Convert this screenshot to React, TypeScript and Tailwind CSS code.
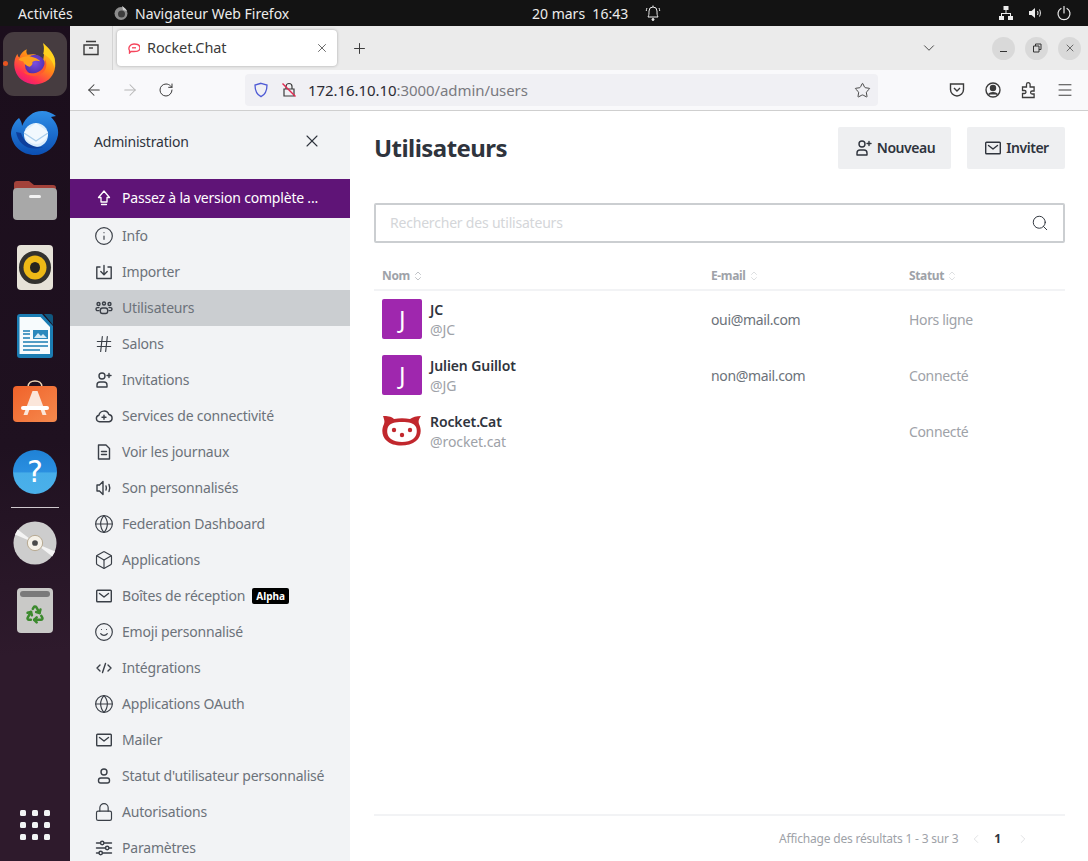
import { ReactNode } from 'react'
import {
  ArrowLeft,
  ArrowRight,
  Box,
  ChevronDown,
  ChevronLeft,
  ChevronRight,
  ChevronsUpDown,
  Globe,
  Hash,
  Info,
  Lock,
  Menu,
  Plus,
  Recycle,
  RotateCw,
  Search,
  Smile,
  Star,
  X,
} from 'lucide-react'

const Svg = ({ children, size = 20, className = '' }: { children: ReactNode; size?: number; className?: string }) => (
  <svg
    width={size}
    height={size}
    viewBox="0 0 20 20"
    fill="none"
    stroke="currentColor"
    strokeWidth="1.4"
    strokeLinecap="round"
    strokeLinejoin="round"
    className={className}
  >
    {children}
  </svg>
)

const MailIcon = ({ size = 20 }: { size?: number }) => (
  <Svg size={size}>
    <rect x="2.7" y="4.2" width="14.6" height="11.6" rx="0.8" />
    <path d="M5.5 7.5 10 11l4.5-3.5" />
  </Svg>
)

const UserPlusIcon = ({ size = 20 }: { size?: number }) => (
  <Svg size={size}>
    <circle cx="8" cy="6" r="3" />
    <path d="M3 17v-2a3 3 0 0 1 3-3h4a3 3 0 0 1 3 3v2z" />
    <path d="M15 3.5v4M13 5.5h4" />
  </Svg>
)

const IconImport = () => (
  <Svg>
    <path d="M6 5H2.800v11.500h14.400V5H14" />
    <path d="M10 3.500v9M6.800 9.600 10 12.800l3.200-3.200" />
  </Svg>
)

const IconTeam = () => (
  <Svg>
    <circle cx="4.500" cy="6" r="1.500" />
    <circle cx="10" cy="5.500" r="1.500" />
    <circle cx="15.500" cy="6" r="1.500" />
    <rect x="6.300" y="10" width="7.400" height="5.500" rx="2.200" />
    <path d="M5 9.600H3.500a1.400 1.400 0 0 0 0 3H5M15 9.600h1.500a1.400 1.400 0 0 1 0 3H15" />
  </Svg>
)

const IconCloud = () => (
  <Svg>
    <path d="M5.500 15.800a3.300 3.300 0 0 1-.6-6.500 5.200 5.200 0 0 1 10-.8 3.700 3.700 0 0 1 .2 7.300z" />
    <path d="M10 9.200v4M8 11.200h4" />
  </Svg>
)

const IconFile = () => (
  <Svg>
    <path d="M4.500 3h7.500l3.500 3.500V17h-11z" />
    <path d="M7.500 9.500h5M7.500 12.500h5" />
  </Svg>
)

const IconSound = () => (
  <Svg>
    <path d="M3 7h2.500L9 3.500v13L5.500 13H3z" />
    <path d="M12 8c.5 1.300.5 2.700 0 4M15 6.500c1 2.200 1 4.800 0 7" />
  </Svg>
)

const IconCode = () => (
  <Svg>
    <path d="M6 7 3 10l3 3M14 7l3 3-3 3M11.500 5.500l-3 9" />
  </Svg>
)

const IconUser = () => (
  <Svg>
    <circle cx="10" cy="6" r="3" />
    <rect x="4.500" y="12" width="11" height="5" rx="2.200" />
  </Svg>
)

const IconSliders = () => (
  <Svg>
    <path d="M2.500 5h4M10 5h7.500M2.500 10h9M15 10h2.500M2.500 15h2.500M8.500 15h9" />
    <circle cx="8.200" cy="5" r="1.700" />
    <circle cx="13.200" cy="10" r="1.700" />
    <circle cx="6.700" cy="15" r="1.700" />
  </Svg>
)

const menu: { label: string; icon: ReactNode; active?: boolean; badge?: string }[] = [
  { label: 'Info', icon: <Info size={20} strokeWidth={1.4} /> },
  { label: 'Importer', icon: <IconImport /> },
  { label: 'Utilisateurs', icon: <IconTeam />, active: true },
  { label: 'Salons', icon: <Hash size={20} strokeWidth={1.4} /> },
  { label: 'Invitations', icon: <UserPlusIcon /> },
  { label: 'Services de connectivité', icon: <IconCloud /> },
  { label: 'Voir les journaux', icon: <IconFile /> },
  { label: 'Son personnalisés', icon: <IconSound /> },
  { label: 'Federation Dashboard', icon: <Globe size={20} strokeWidth={1.4} /> },
  { label: 'Applications', icon: <Box size={20} strokeWidth={1.4} /> },
  { label: 'Boîtes de réception', icon: <MailIcon />, badge: 'Alpha' },
  { label: 'Emoji personnalisé', icon: <Smile size={20} strokeWidth={1.4} /> },
  { label: 'Intégrations', icon: <IconCode /> },
  { label: 'Applications OAuth', icon: <Globe size={20} strokeWidth={1.4} /> },
  { label: 'Mailer', icon: <MailIcon /> },
  { label: "Statut d'utilisateur personnalisé", icon: <IconUser /> },
  { label: 'Autorisations', icon: <Lock size={20} strokeWidth={1.4} /> },
  { label: 'Paramètres', icon: <IconSliders /> },
]

const users = [
  { name: 'JC', handle: '@JC', email: 'oui@mail.com', status: 'Hors ligne', letter: 'J' },
  { name: 'Julien Guillot', handle: '@JG', email: 'non@mail.com', status: 'Connecté', letter: 'J' },
  { name: 'Rocket.Cat', handle: '@rocket.cat', email: '', status: 'Connecté', letter: '' },
]

const FirefoxLogo = () => (
  <svg width="44" height="46" viewBox="0 0 48 48">
    <defs>
      <linearGradient id="ffa" x1="0.8" y1="0" x2="0.2" y2="1">
        <stop offset="0" stopColor="#ffe226" />
        <stop offset="0.45" stopColor="#ff8a16" />
        <stop offset="0.8" stopColor="#ff2d55" />
        <stop offset="1" stopColor="#e31587" />
      </linearGradient>
      <radialGradient id="ffb" cx="0.5" cy="0.4" r="0.6">
        <stop offset="0" stopColor="#7b4fe0" />
        <stop offset="1" stopColor="#4d2ba8" />
      </radialGradient>
    </defs>
    <path d="M33 1c2 5 9 9 12 16 3 9 0 19-6 24-8 7-22 7-30 0C3 36 0 27 2 19c1-3 2-5 3-6 0 2 1 3 2 4 1-4 4-7 8-9-1 3 0 5 1 6 4-1 8-1 11 1l6 4c1-6 2-12 0-18z" fill="url(#ffa)" />
    <circle cx="24" cy="25" r="11" fill="url(#ffb)" />
    <path d="M6 19c3-3 10-4 14-3 5 1 9 4 10 5-3-1-7-1-9 1 1 2-1 4-3 5-3-1-6-3-7-6-1 0-4-1-5-2z" fill="#ffa01c" />
    <path d="M35 19c3 6 1 13-5 16-6 4-15 2-19-3 6 3 14 3 19-1 4-3 5-8 5-12z" fill="#ff5a2c" />
    <path d="M33 1c4 4 10 9 12 16 1 4 1 8 0 11-1-7-6-12-12-15 1-4 1-8 0-12z" fill="#ffd21e" />
  </svg>
)

const ThunderbirdLogo = () => (
  <svg width="48" height="46" viewBox="0 0 48 46">
    <defs>
      <linearGradient id="tba" x1="0" y1="0" x2="0" y2="1">
        <stop offset="0" stopColor="#2f8fe8" />
        <stop offset="1" stopColor="#0b4fb3" />
      </linearGradient>
    </defs>
    <path d="M8 8c2 3 3 5 3 8C15 7 22 1 31 1c6 0 10 2 14 5l-5 1c5 5 8 11 7 18-2 12-12 20-23 20C11 45 1 36 0 24c0-6 3-12 8-16z" fill="url(#tba)" />
    <circle cx="25" cy="25" r="12" fill="#d9ecfb" />
    <path d="M13 22 25 13l12 9v3c-3 6-7 9-12 9s-9-3-12-9z" fill="#f1f8fe" />
    <path d="M13 23l12 8 12-8" fill="none" stroke="#a9cdec" strokeWidth="1.400" />
    <path d="M5 22c2 13 14 20 27 15-10 1-19-4-22-14z" fill="#0d3f9c" />
  </svg>
)

const dockIcons: { key: string; className: string; node: ReactNode }[] = [
  {
    key: 'thunderbird',
    className: 'mt-[14px]',
    node: <ThunderbirdLogo />,
  },
  {
    key: 'files',
    className: 'mt-[24px]',
    node: (
      <svg width="44" height="40" viewBox="0 0 44 40" className="block">
        <path d="M1 4a3 3 0 0 1 3-3h12l5 4h19a3 3 0 0 1 3 3v10H1z" fill="#a3423a" />
        <rect x="0" y="8" width="44" height="32" rx="4" fill="#a8a8a8" />
        <rect x="16" y="15" width="12" height="3" rx="1.500" fill="#f3f3f3" />
      </svg>
    ),
  },
  {
    key: 'rhythmbox',
    className: 'mt-[25px]',
    node: (
      <svg width="36" height="45" viewBox="0 0 36 45" className="block">
        <rect width="36" height="45" rx="4" fill="#e6e2d8" />
        <ellipse cx="18" cy="22.500" rx="16" ry="16.500" fill="#33322f" />
        <ellipse cx="18" cy="22.500" rx="11.500" ry="12" fill="#edb916" />
        <ellipse cx="18" cy="22.500" rx="5" ry="5.500" fill="#26251f" />
      </svg>
    ),
  },
  {
    key: 'writer',
    className: 'mt-[24px]',
    node: (
      <svg width="36" height="44" viewBox="0 0 36 44" className="block">
        <path d="M3 0h22l11 12v29a3 3 0 0 1-3 3H3a3 3 0 0 1-3-3V3a3 3 0 0 1 3-3z" fill="#1b7db3" />
        <path d="M2.500 3h21l9.500 10v27H2.500z" fill="#f7fbfd" />
        <path d="M27 0h6a3 3 0 0 1 3 3v8z" fill="#10577f" />
        <path d="M6 17h7M6 20h7M6 24h7M6 28h25M6 32h25M6 36h17" stroke="#1b7db3" strokeWidth="1.600" />
        <rect x="16" y="16" width="15" height="9" fill="#2a88bd" />
        <path d="M17 24l4-5 3 3 2-2 4 4z" fill="#d7ebf6" />
      </svg>
    ),
  },
  {
    key: 'store',
    className: 'mt-[22px]',
    node: (
      <svg width="44" height="42" viewBox="0 0 44 42" className="block">
        <defs>
          <linearGradient id="sto" x1="0" y1="0" x2="1" y2="1">
            <stop offset="0" stopColor="#f0622a" />
            <stop offset="1" stopColor="#f58a4e" />
          </linearGradient>
        </defs>
        <path d="M15 7c0-8 14-8 14 0" fill="none" stroke="#eed5b5" strokeWidth="1.600" />
        <rect y="6" width="44" height="36" rx="4" fill="url(#sto)" />
        <path d="M19.500 11h5l9 24h-4l-2.500-7h-10L14.500 35h-4z" fill="#fbe6da" />
        <rect x="8" y="26" width="28" height="4" rx="2" fill="#fff" />
      </svg>
    ),
  },
  {
    key: 'help',
    className: 'mt-[28px]',
    node: (
      <div className="flex h-[44px] w-[44px] items-center justify-center rounded-full bg-[linear-gradient(#1f82d6_0%,#2a8fe0_50%,#47aee9_52%,#4ab0ea_100%)] font-['DejaVu_Sans',sans-serif] text-[30px] leading-none tracking-normal text-white">
        ?
      </div>
    ),
  },
]

const App = () => {
  return (
    <div className="flex h-screen w-full flex-col overflow-hidden bg-white font-['Noto_Sans','Liberation_Sans',sans-serif] text-[14px] text-[#6c727a] tracking-[-0.2px]">
      {/* barre gnome */}
      <div className="flex h-[26px] shrink-0 items-center bg-[#131313] text-[14px] tracking-normal text-[#ececec]">
        <div className="ml-[18px] w-[96px]">Activités</div>
        <svg width="16" height="16" viewBox="0 0 16 16" className="ml-[-1px]">
          <circle cx="8" cy="8.500" r="6.500" fill="#8c8c8c" />
          <circle cx="8.500" cy="9" r="3.500" fill="#3d3d3d" />
          <path d="M9 1c2 1 4 3 5 5L10 5z" fill="#cfcfcf" />
        </svg>
        <div className="ml-[6px] w-[397px]">Navigateur Web Firefox</div>
        <div className="w-[96px] whitespace-nowrap">20 mars&nbsp;&nbsp;16:43</div>
        <svg width="16" height="18" viewBox="0 0 16 18" fill="none" stroke="#ececec" strokeWidth="1" className="ml-[17px]">
          <path d="M3 13c1-2 1-3 1-6a4 4 0 0 1 8 0c0 3 0 4 1 6z" />
          <path d="M8 3V1.500M2 4c-.5 1-.7 2-.7 3M14 4c.5 1 .7 2 .7 3" />
          <circle cx="8" cy="15.500" r="1" fill="#ececec" />
        </svg>
        <div className="ml-auto mr-[16px] flex items-center gap-[13px]">
          <svg width="16" height="16" viewBox="0 0 16 16" fill="#ececec">
            <rect x="5.500" y="1" width="5" height="4" />
            <rect x="1" y="11" width="5" height="4" />
            <rect x="10" y="11" width="5" height="4" />
            <path d="M7.500 5h1v3h4.500v3h-1V9H4v2H3V8h4.500z" />
          </svg>
          <svg width="16" height="16" viewBox="0 0 16 16" fill="none" stroke="#ececec">
            <path d="M2 6h2.500L8 3v10l-3.500-3H2z" fill="#ececec" stroke="none" />
            <path d="M10.500 6c.6 1.300.6 2.700 0 4M12.500 4.500c1.200 2.200 1.200 4.800 0 7" />
          </svg>
          <svg width="16" height="16" viewBox="0 0 16 16" fill="none" stroke="#ececec" strokeWidth="1.200" strokeLinecap="round">
            <path d="M8 1.500v6.500" />
            <path d="M5 3.500a6 6 0 1 0 6 0" />
          </svg>
        </div>
      </div>

      <div className="flex min-h-0 flex-1">
        {/* dock */}
        <div className="flex w-[70px] shrink-0 flex-col items-center bg-[linear-gradient(175deg,#1b0e1c_0%,#1f1120_50%,#2e1a2c_75%,#2e1a2c_100%)]">
          <div className="relative mt-[6px] flex h-[64px] w-[64px] items-center justify-center rounded-[11px] bg-[#463c40]">
            <FirefoxLogo />
            <div className="absolute left-[0px] top-[29px] h-[5px] w-[5px] rounded-full bg-[#e95420]" />
          </div>
          {dockIcons.map((item) => (
            <div key={item.key} className={`flex justify-center ${item.className}`}>
              {item.node}
            </div>
          ))}
          <div className="mt-[13px] h-px w-[48px] shrink-0 bg-[#cfc9cd]" />
          <div className="mt-[13px]">
            <svg width="44" height="44" viewBox="0 0 46 46" className="block">
              <circle cx="23" cy="23" r="22.500" fill="#cdcdcd" />
              <path d="M23 23 5 9 2 14zM23 23l18 14 3-5z" fill="#f4f4f4" />
              <circle cx="23" cy="23" r="8" fill="#f5f1e8" stroke="#b3a68e" />
              <circle cx="23" cy="23" r="3" fill="#4a4a4a" />
            </svg>
          </div>
          <div className="mt-[23px] flex h-[45px] w-[36px] flex-col items-center rounded-[4px] bg-[#c9c9c7] pt-[3px]">
            <div className="h-[6px] w-[30px] rounded-[3px] bg-[#7a7a7a]" />
            <Recycle size={20} strokeWidth={3} className="mt-[7px] text-[#3c8a2e]" />
          </div>
          <div className="mb-[21px] mt-auto grid grid-cols-3 gap-x-[6px] gap-y-[6px]">
            {Array.from({ length: 9 }).map((_, i) => (
              <div key={i} className="h-[6px] w-[6px] rounded-[1.5px] bg-[#f2f2f2]" />
            ))}
          </div>
        </div>

        {/* navigateur */}
        <div className="flex min-w-0 flex-1 flex-col">
          <div className="flex h-[44px] shrink-0 items-center bg-[#ebebeb] text-[#3b3b3b]">
            <div className="flex h-full w-[43px] items-center justify-center border-r border-[#d4d4d4]">
              <svg width="18" height="18" viewBox="0 0 18 18" fill="none" stroke="#3b3b3b" strokeWidth="1.400">
                <path d="M4 2.500h10M2 6h14v9.500H2z" />
                <path d="M7 9h4" />
              </svg>
            </div>
            <div className="ml-[4px] flex h-[36px] w-[220px] items-center rounded-[4px] bg-white pl-[11px] pr-[8px] shadow-[0_0_3px_rgba(0,0,0,0.3)]">
              <svg width="12" height="12" viewBox="0 0 12 12" fill="none" stroke="#f5455c" strokeWidth="1.300">
                <path d="M3 9.500 1.500 11V8.500C0 6 1.500 2 6 2s6 2 6 4-2 3.500-6 3.500z" />
                <path d="M4 5.800h4" />
              </svg>
              <span className="ml-[7px] text-[14.500px] tracking-[-0.1px] text-[#3b3b3b]">Rocket.Chat</span>
              <X size={14} strokeWidth={1.300} className="ml-auto" />
            </div>
            <Plus size={17} strokeWidth={1.400} className="ml-[14px]" />
            <ChevronDown size={18} strokeWidth={1.200} className="ml-[552px]" />
            <div className="ml-[54px] flex items-center gap-[10px] pr-[5px]">
              <div className="flex h-[23px] w-[23px] items-center justify-center rounded-full bg-[#d9d9d9]">
                <div className="mt-[6px] h-px w-[7px] bg-[#333]" />
              </div>
              <div className="flex h-[23px] w-[23px] items-center justify-center rounded-full bg-[#d9d9d9]">
                <svg width="10" height="10" viewBox="0 0 10 10" fill="none" stroke="#333">
                  <path d="M1.500 3h5.500v6H1.500zM3.500 3V1H9v5.500H7" />
                </svg>
              </div>
              <div className="flex h-[23px] w-[23px] items-center justify-center rounded-full bg-[#d9d9d9]">
                <X size={12} strokeWidth={1.400} />
              </div>
            </div>
          </div>

          <div className="flex h-[41px] shrink-0 items-center border-b border-[#cfcfcf] bg-[#f9f9fb] text-[#3b3b3b]">
            <ArrowLeft size={18} strokeWidth={1.400} className="ml-[15px]" />
            <ArrowRight size={18} strokeWidth={1.400} className="ml-[18px] text-[#b5b5b5]" />
            <RotateCw size={16} strokeWidth={1.500} className="ml-[19px]" />
            <div className="ml-[71px] flex h-[32px] w-[633px] items-center rounded-[4px] bg-[#f0f0f4] pl-[8px] pr-[7px]">
              <svg width="16" height="16" viewBox="0 0 16 16" fill="none" stroke="#4f5bd5" strokeWidth="1.300">
                <path d="M8 1.300 14 3c0 6-1.500 9.500-6 11.700C3.500 12.500 2 9 2 3z" />
              </svg>
              <svg width="16" height="16" viewBox="0 0 16 16" fill="none" stroke="#3b3b3b" strokeWidth="1.200" className="ml-[12px]">
                <path d="M5 7V4.500a3 3 0 0 1 6 0V7M3 7h10v7H3z" />
                <path d="M1.500 1.500l13 13" stroke="#e22850" strokeWidth="1.400" />
              </svg>
              <span className="ml-[11px] text-[15px] tracking-[-0.07px] text-[#2b2a33]">
                172.16.10.10<span className="text-[#7a7a80]">:3000/admin/users</span>
              </span>
              <Star size={17} strokeWidth={1.300} className="ml-auto" />
            </div>
            <div className="ml-[70px] flex items-center gap-[18px]">
              <svg width="18" height="18" viewBox="0 0 18 18" fill="none" stroke="#3b3b3b" strokeWidth="1.400">
                <path d="M2.500 3h13v5.500a6.500 6.500 0 0 1-13 0z" />
                <path d="M6 7l3 3 3-3" />
              </svg>
              <svg width="18" height="18" viewBox="0 0 18 18" fill="none" stroke="#3b3b3b" strokeWidth="1.400">
                <circle cx="9" cy="9" r="7" />
                <circle cx="9" cy="7" r="2.500" fill="#3b3b3b" />
                <path d="M4.500 13.500c2-2.500 7-2.500 9 0" fill="#3b3b3b" />
              </svg>
              <svg width="18" height="18" viewBox="0 0 18 18" fill="none" stroke="#3b3b3b" strokeWidth="1.300">
                <path d="M2.500 6h4V3.500a1.800 1.800 0 0 1 3.600 0V6h4v4h-2a1.500 1.500 0 0 0 0 3h2v3.500h-11.600v-4h2a1.500 1.500 0 0 0 0-3h-2z" />
              </svg>
              <Menu size={18} strokeWidth={1.300} />
            </div>
          </div>

          <div className="flex min-h-0 flex-1">
            {/* sidebar */}
            <aside className="w-[280px] shrink-0 overflow-hidden bg-[#f2f3f5]">
              <div className="flex h-[68px] items-center justify-between pb-[8px] pl-[24px] pr-[28px]">
                <span className="text-[#2f343d]">Administration</span>
                <X size={20} strokeWidth={1.300} className="text-[#2f343d]" />
              </div>
              <div className="flex h-[39px] items-center bg-[#5f1477] pb-[2px] pl-[24px] text-white">
                <svg width="20" height="20" viewBox="0 0 20 20" fill="none" stroke="currentColor" strokeWidth="1.300" strokeLinejoin="round" strokeLinecap="round">
                  <path d="M10 3 15.500 9.500H13V14H7V9.500H4.500zM7.500 16.500h5" />
                </svg>
                <span className="ml-[8px]">Passez à la version complète ...</span>
              </div>
              {menu.map((item) => (
                <div
                  key={item.label}
                  className={`flex h-[36px] items-center pb-[1px] pl-[24px] ${item.active ? 'bg-[#cbced1]' : ''}`}
                >
                  <span className="text-[#3a3f47]">{item.icon}</span>
                  <span className="ml-[8px] whitespace-nowrap">{item.label}</span>
                  {item.badge && (
                    <span className="ml-[7px] rounded-[2px] bg-black px-[4px] text-[10px] font-bold leading-[16px] tracking-normal text-white">
                      {item.badge}
                    </span>
                  )}
                </div>
              ))}
            </aside>

            {/* contenu */}
            <main className="flex min-w-0 flex-1 flex-col pl-[24px] pr-[23px]">
              <div className="flex items-center justify-between pt-[16px]">
                <h1 className="text-[24px] font-bold tracking-[-0.55px] text-[#2f343d]">Utilisateurs</h1>
                <div className="flex gap-[16px]">
                  <button className="flex h-[42px] w-[113px] items-center justify-center gap-[3px] rounded-[2px] bg-[#eeeff1] pb-[1px] font-semibold tracking-[-0.45px] text-[#2f343d]">
                    <UserPlusIcon />
                    Nouveau
                  </button>
                  <button className="flex h-[42px] w-[98px] items-center justify-center gap-[3px] rounded-[2px] bg-[#eeeff1] pb-[1px] font-semibold tracking-[-0.45px] text-[#2f343d]">
                    <MailIcon />
                    Inviter
                  </button>
                </div>
              </div>

              <div className="mt-[34px] flex h-[40px] items-center justify-between rounded-[2px] border-2 border-[#cbced1] pl-[14px] pr-[14px]">
                <span className="pb-[2px] text-[#d4d6d9]">Rechercher des utilisateurs</span>
                <Search size={18} strokeWidth={1.300} className="text-[#2f343d]" />
              </div>

              <div className="mt-[22px] grid h-[26px] grid-cols-[329px_198px_1fr] items-center border-b-2 border-[#f2f3f5] pb-[3px] pl-[8px] text-[12px] font-bold tracking-[-0.35px] text-[#9ea2a8]">
                <div className="flex items-center gap-[2px]">
                  Nom
                  <ChevronsUpDown size={12} strokeWidth={1.300} />
                </div>
                <div className="flex items-center gap-[2px]">
                  E-mail
                  <ChevronsUpDown size={12} strokeWidth={1.300} className="text-[#cbced1]" />
                </div>
                <div className="flex items-center gap-[2px]">
                  Statut
                  <ChevronsUpDown size={12} strokeWidth={1.300} className="text-[#cbced1]" />
                </div>
              </div>

              {users.map((user) => (
                <div key={user.name} className="grid h-[56px] grid-cols-[329px_198px_1fr] items-center pl-[8px] tracking-[-0.35px]">
                  <div className="flex items-center">
                    {user.letter ? (
                      <div className="flex h-[40px] w-[40px] items-center justify-center rounded-[2px] bg-[#9f27ae] text-[24px] font-normal text-white">
                        {user.letter}
                      </div>
                    ) : (
                      <svg width="40" height="40" viewBox="0 0 40 40">
                        <path d="M1 5c4 0 8 0 11 3 5-1 11-1 16 0 3-2 6-3 11-3-2 3-3 5-2 8 3 6 2 13-3 17-7 6-23 6-29 0-5-4-6-11-3-17 1-3 0-5-1-8z" fill="#c1272d" />
                        <path d="M6 16c2-4 7-5 14-5s12 1 14 5c2 5 0 10-3 12-5 4-17 4-22 0-3-2-5-7-3-12z" fill="#fff" />
                        <circle cx="12" cy="19" r="2.200" fill="#c1272d" />
                        <circle cx="28" cy="19" r="2.200" fill="#c1272d" />
                        <circle cx="20" cy="24" r="2.200" fill="#c1272d" />
                      </svg>
                    )}
                    <div className="ml-[8px] flex flex-col pt-[2px] leading-[20px]">
                      <span className="font-semibold tracking-[-0.1px] text-[#2f343d]">{user.name}</span>
                      <span className="tracking-[-0.1px] text-[#9ea2a8]">{user.handle}</span>
                    </div>
                  </div>
                  <div>{user.email}</div>
                  <div className="text-[#9ea2a8]">{user.status}</div>
                </div>
              ))}

              <div className="mt-auto flex h-[47px] items-center justify-end border-t-2 border-[#f2f3f5] text-[12px] text-[#9ea2a8]">
                <span>Affichage des résultats 1 - 3 sur 3</span>
                <ChevronLeft size={14} strokeWidth={1.200} className="ml-[11px] text-[#d4d6d9]" />
                <span className="ml-[11px] font-bold text-[#2f343d]">1</span>
                <ChevronRight size={14} strokeWidth={1.200} className="ml-[15px] mr-[35px] text-[#d4d6d9]" />
              </div>
            </main>
          </div>
        </div>
      </div>
    </div>
  )
}

export default App
